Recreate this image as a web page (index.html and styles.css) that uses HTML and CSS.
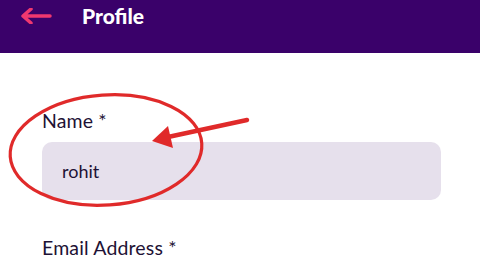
FILE: index.html
```html
<!DOCTYPE html>
<html>
<head>
<meta charset="utf-8">
<link rel="stylesheet" href="styles.css">
</head>
<body>
<header class="topbar">
  <svg class="back" width="32" height="16" viewBox="0 0 32 16">
    <path d="M30 8H4M11 1L3 8l8 7" fill="none" stroke="#f0386f" stroke-width="3.5" stroke-linecap="round" stroke-linejoin="round"/>
  </svg>
  <h1 class="title">Profile</h1>
</header>
<main class="form">
  <div class="field">
    <label class="label">Name *</label>
    <div class="input">rohit</div>
  </div>
  <div class="field">
    <label class="label">Email Address *</label>
  </div>
</main>
<svg class="annot" width="480" height="270" viewBox="0 0 480 270">
  <ellipse cx="106" cy="150" rx="96" ry="55" transform="rotate(-4 106 150)" fill="none" stroke="#e02a2a" stroke-width="3.2"/>
  <path d="M247 120L168 137" stroke="#e02a2a" stroke-width="4.5" stroke-linecap="round"/>
  <path d="M152 141L168 126L173 148Z" fill="#e02a2a"/>
</svg>
</body>
</html>
```
FILE: styles.css
```css
html, body {
  margin: 0;
  padding: 0;
  width: 480px;
  height: 270px;
  overflow: hidden;
  background: #ffffff;
  font-family: Lato, "Open Sans", sans-serif;
  position: relative;
}
.topbar {
  height: 53px;
  background: #3a016a;
  display: flex;
  align-items: flex-start;
  padding-left: 20px;
  box-sizing: border-box;
}
.back {
  margin-top: 8px;
}
.title {
  margin: 2px 0 0 30px;
  color: #ffffff;
  font-size: 21px;
  font-weight: 900;
  line-height: 28px;
}
.form {
  padding: 55px 39px 0 42px;
}
.field {
  display: flex;
  flex-direction: column;
}
.label {
  color: #1e1235;
  font-size: 19.5px;
  letter-spacing: 0.15px;
  line-height: 25px;
}
.input {
  margin-top: 9px;
  height: 58px;
  background: #e6e0ec;
  border-radius: 10px;
  padding-left: 20px;
  display: flex;
  align-items: center;
  font-size: 18px;
  color: #1e1235;
  margin-bottom: 35px;
}
.annot {
  position: absolute;
  left: 0;
  top: 0;
}
```
